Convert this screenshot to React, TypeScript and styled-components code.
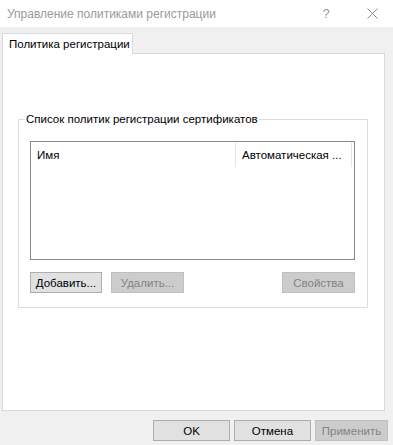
import styled, { createGlobalStyle } from 'styled-components';

const GlobalStyle = createGlobalStyle`
  html, body {
    margin: 0;
    padding: 0;
    background: #ffffff;
  }
  body {
    font-family: "Liberation Sans", Arial, sans-serif;
    font-size: 11.5px;
    color: #000000;
  }
`;

const Window = styled.div`
  width: 393px;
  height: 445px;
  display: flex;
  flex-direction: column;
  background: #f0f0f0;
  box-sizing: border-box;
  overflow: hidden;
`;

const TitleBar = styled.div`
  height: 27px;
  background: #ffffff;
  display: flex;
  align-items: center;
  padding-left: 7px;
  flex-shrink: 0;
`;

const TitleText = styled.span`
  flex: 1;
  font-size: 12px;
  color: #9a9a9a;
`;

const TitleButton = styled.span<{ $w: number }>`
  width: ${p => p.$w}px;
  height: 27px;
  display: flex;
  align-items: center;
  justify-content: center;
  color: #9a9a9a;
  font-size: 13px;
`;

const Body = styled.div`
  flex: 1;
  display: flex;
  flex-direction: column;
  padding: 6px 8px 3px 2px;
`;

const TabStrip = styled.div`
  display: flex;
  height: 21px;
  margin-bottom: -1px;
  position: relative;
  z-index: 1;
`;

const Tab = styled.div`
  width: 131px;
  box-sizing: border-box;
  padding: 0 0 0 6px;
  display: flex;
  align-items: center;
  white-space: nowrap;
  background: #ffffff;
  border: 1px solid #d9d9d9;
  border-bottom: none;
`;

const Panel = styled.div`
  height: 358px;
  background: #ffffff;
  border: 1px solid #d9d9d9;
  box-sizing: border-box;
  padding: 58px 16px 0 15px;
`;

const Group = styled.fieldset`
  margin: 0;
  height: 196px;
  box-sizing: border-box;
  border: 1px solid #dcdcdc;
  padding: 15px 12px 0 11px;
  display: flex;
  flex-direction: column;
`;

const Legend = styled.legend`
  padding: 0 1px;
  margin-left: -5px;
  line-height: 14px;
`;

const ListView = styled.div`
  height: 119px;
  border: 1px solid #828790;
  box-sizing: border-box;
  background: #ffffff;
`;

const Header = styled.div`
  display: grid;
  grid-template-columns: 205px 116px 1fr;
  height: 25px;
`;

const HeaderCell = styled.div`
  display: flex;
  align-items: center;
  padding-left: 6px;
  border-right: 1px solid #e5e5e5;
  white-space: nowrap;
  overflow: hidden;
`;

const ButtonRow = styled.div`
  display: flex;
  gap: 9px;
  margin-top: 12px;
`;

const Spacer = styled.div`
  flex: 1;
`;

const Button = styled.button<{ $w?: number }>`
  width: ${p => p.$w ?? 73}px;
  height: 21px;
  box-sizing: border-box;
  border: 1px solid #adadad;
  background: #e1e1e1;
  color: #000000;
  font-family: inherit;
  font-size: 11.5px;
  padding: 0;
  white-space: nowrap;
  display: flex;
  align-items: center;
  justify-content: center;

  &:disabled {
    background: #cccccc;
    border-color: #bfbfbf;
    color: #838383;
  }
`;

const Footer = styled.div`
  display: flex;
  justify-content: flex-end;
  gap: 4px;
  margin-top: 9px;
  margin-right: -3px;
`;

export default function App() {
  return (
    <Window>
      <GlobalStyle />
      <TitleBar>
        <TitleText>Управление политиками регистрации</TitleText>
        <TitleButton $w={50}>?</TitleButton>
        <TitleButton $w={42}>
          <svg width="11" height="11" viewBox="0 0 11 11">
            <path d="M0.5 0.5 L10.5 10.5 M10.5 0.5 L0.5 10.5" stroke="#8a8a8a" strokeWidth="1" fill="none" />
          </svg>
        </TitleButton>
      </TitleBar>
      <Body>
        <TabStrip>
          <Tab>Политика регистрации</Tab>
        </TabStrip>
        <Panel>
          <Group>
            <Legend>Список политик регистрации сертификатов</Legend>
            <ListView>
              <Header>
                <HeaderCell>Имя</HeaderCell>
                <HeaderCell>Автоматическая ...</HeaderCell>
              </Header>
            </ListView>
            <ButtonRow>
              <Button $w={72}>Добавить...</Button>
              <Button $w={73} disabled>Удалить...</Button>
              <Spacer />
              <Button $w={73} disabled>Свойства</Button>
            </ButtonRow>
          </Group>
        </Panel>
        <Footer>
          <Button $w={77}>OK</Button>
          <Button $w={77}>Отмена</Button>
          <Button $w={73} disabled>Применить</Button>
        </Footer>
      </Body>
    </Window>
  );
}
